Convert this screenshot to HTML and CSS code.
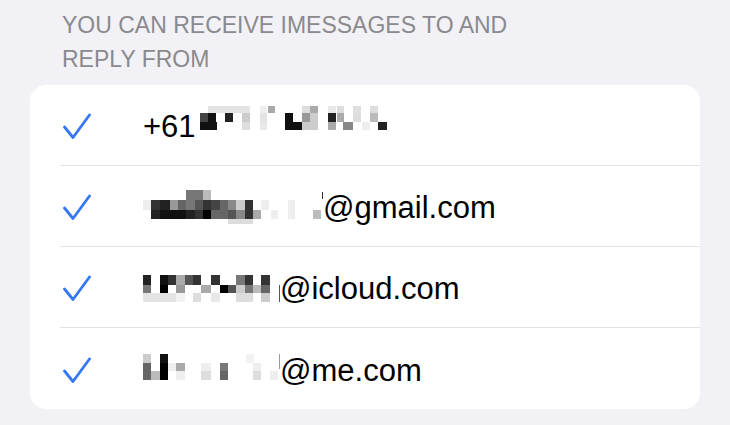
FILE: index.html
```html
<!DOCTYPE html>
<html lang="en">
<head>
    <meta charset="UTF-8">
    <meta name="viewport" content="width=device-width, initial-scale=1.0">
    <title>Send &amp; Receive</title>
    <link rel="stylesheet" href="styles.css">
</head>
<body>
    <div class="section-header">You can receive iMessages to and reply from</div>

    <div class="card">
        <div class="row">
            <div class="check">
                <svg width="28" height="26" viewBox="0 0 28 26"><path d="M1.5 14 L10 24.5 L26.5 2" /></svg>
            </div>
            <span class="address">+61</span>
            <svg class="redact redact-after" width="190" height="36">
                <g transform="translate(0,0)">
                    <rect x="8" y="1" width="42" height="7" fill="#e4e4e4"/>
                    <rect x="60" y="1" width="7" height="7" fill="#eee"/>
                    <rect x="68" y="1" width="7" height="7" fill="#aaa"/>
                    <rect x="102" y="1" width="8" height="7" fill="#ddd"/>
                    <rect x="110" y="1" width="8" height="7" fill="#aaa"/>
                    <rect x="128" y="1" width="8" height="7" fill="#e8e8e8"/>
                    <rect x="137" y="1" width="7" height="7" fill="#ddd"/>
                    <rect x="153" y="1" width="8" height="7" fill="#e0e0e0"/>
                    <rect x="170" y="1" width="8" height="7" fill="#ddd"/>

                    <rect x="0" y="8" width="8" height="9" fill="#444"/>
                    <rect x="8" y="8" width="8" height="9" fill="#111"/>
                    <rect x="25" y="8" width="8" height="9" fill="#222"/>
                    <rect x="42" y="8" width="8" height="9" fill="#ccc"/>
                    <rect x="60" y="8" width="7" height="9" fill="#e4e4e4"/>
                    <rect x="85" y="8" width="8" height="9" fill="#111"/>
                    <rect x="102" y="8" width="8" height="9" fill="#999"/>
                    <rect x="110" y="8" width="8" height="9" fill="#ccc"/>
                    <rect x="128" y="8" width="8" height="9" fill="#222"/>
                    <rect x="137" y="8" width="7" height="9" fill="#aaa"/>
                    <rect x="153" y="8" width="8" height="9" fill="#ddd"/>
                    <rect x="170" y="8" width="8" height="9" fill="#bbb"/>

                    <rect x="0" y="17" width="17" height="8" fill="#111"/>
                    <rect x="42" y="17" width="8" height="8" fill="#ddd"/>
                    <rect x="60" y="17" width="7" height="8" fill="#e8e8e8"/>
                    <rect x="85" y="17" width="17" height="8" fill="#111"/>
                    <rect x="102" y="17" width="16" height="8" fill="#ccc"/>
                    <rect x="128" y="17" width="8" height="8" fill="#aaa"/>
                    <rect x="143" y="17" width="10" height="8" fill="#888"/>
                    <rect x="162" y="17" width="8" height="8" fill="#eee"/>
                    <rect x="178" y="17" width="9" height="8" fill="#222"/>
                </g>
            </svg>
        </div>

        <div class="row">
            <div class="check">
                <svg width="28" height="26" viewBox="0 0 28 26"><path d="M1.5 14 L10 24.5 L26.5 2" /></svg>
            </div>
            <svg class="redact" width="180" height="36">
                <g transform="translate(0,2)">
                    <rect x="43" y="0" width="17" height="10" fill="#777"/>
                    <rect x="60" y="0" width="8" height="10" fill="#bbb"/>

                    <rect x="0" y="10" width="8" height="10" fill="#eee"/>
                    <rect x="8" y="10" width="9" height="10" fill="#333"/>
                    <rect x="17" y="10" width="10" height="10" fill="#222"/>
                    <rect x="27" y="10" width="8" height="10" fill="#999"/>
                    <rect x="35" y="10" width="8" height="10" fill="#666"/>
                    <rect x="43" y="10" width="9" height="10" fill="#777"/>
                    <rect x="52" y="10" width="8" height="10" fill="#555"/>
                    <rect x="60" y="10" width="8" height="10" fill="#333"/>
                    <rect x="68" y="10" width="9" height="10" fill="#444"/>
                    <rect x="77" y="10" width="8" height="10" fill="#666"/>
                    <rect x="85" y="10" width="8" height="10" fill="#888"/>
                    <rect x="93" y="10" width="9" height="10" fill="#ccc"/>
                    <rect x="102" y="10" width="8" height="10" fill="#333"/>
                    <rect x="118" y="10" width="8" height="10" fill="#eee"/>
                    <rect x="145" y="10" width="7" height="10" fill="#eee"/>

                    <rect x="8" y="20" width="9" height="9" fill="#222"/>
                    <rect x="17" y="20" width="26" height="9" fill="#111"/>
                    <rect x="43" y="20" width="9" height="9" fill="#222"/>
                    <rect x="52" y="20" width="8" height="9" fill="#333"/>
                    <rect x="60" y="20" width="8" height="9" fill="#000"/>
                    <rect x="68" y="20" width="17" height="9" fill="#666"/>
                    <rect x="85" y="20" width="8" height="9" fill="#555"/>
                    <rect x="93" y="20" width="9" height="9" fill="#888"/>
                    <rect x="102" y="20" width="8" height="9" fill="#333"/>
                    <rect x="110" y="20" width="8" height="9" fill="#aaa"/>
                    <rect x="128" y="20" width="7" height="9" fill="#eee"/>
                    <rect x="145" y="20" width="7" height="9" fill="#eee"/>
                    <rect x="170" y="20" width="8" height="9" fill="#bbb"/>

                    <rect x="85" y="29" width="25" height="6" fill="#ddd"/>
                    <rect x="179" y="2" width="1.2" height="7" fill="#333"/>
                </g>
            </svg>
            <span class="address">@gmail.com</span>
        </div>

        <div class="row">
            <div class="check">
                <svg width="28" height="26" viewBox="0 0 28 26"><path d="M1.5 14 L10 24.5 L26.5 2" /></svg>
            </div>
            <svg class="redact" width="137" height="36">
                <g transform="translate(0,6)">
                    <rect x="0" y="0" width="8" height="10" fill="#222"/>
                    <rect x="17" y="0" width="8" height="10" fill="#111"/>
                    <rect x="25" y="0" width="8" height="10" fill="#333"/>
                    <rect x="33" y="0" width="9" height="10" fill="#aaa"/>
                    <rect x="42" y="0" width="8" height="10" fill="#555"/>
                    <rect x="50" y="0" width="8" height="10" fill="#333"/>
                    <rect x="68" y="0" width="9" height="10" fill="#333"/>
                    <rect x="93" y="0" width="9" height="10" fill="#777"/>
                    <rect x="102" y="0" width="8" height="10" fill="#333"/>
                    <rect x="118" y="0" width="9" height="10" fill="#333"/>

                    <rect x="0" y="10" width="8" height="8" fill="#777"/>
                    <rect x="17" y="10" width="8" height="8" fill="#000"/>
                    <rect x="33" y="10" width="9" height="8" fill="#999"/>
                    <rect x="58" y="10" width="10" height="8" fill="#aaa"/>
                    <rect x="77" y="10" width="8" height="8" fill="#000"/>
                    <rect x="85" y="10" width="8" height="8" fill="#555"/>
                    <rect x="93" y="10" width="9" height="8" fill="#ccc"/>
                    <rect x="102" y="10" width="8" height="8" fill="#777"/>
                    <rect x="110" y="10" width="8" height="8" fill="#bbb"/>
                    <rect x="118" y="10" width="9" height="8" fill="#666"/>

                    <rect x="0" y="18" width="33" height="9" fill="#e4e4e4"/>
                    <rect x="33" y="18" width="9" height="9" fill="#f2f2f2"/>
                    <rect x="50" y="18" width="8" height="9" fill="#ddd"/>
                    <rect x="68" y="18" width="9" height="9" fill="#e8e8e8"/>
                    <rect x="93" y="18" width="17" height="9" fill="#ddd"/>
                    <rect x="118" y="18" width="9" height="9" fill="#ccc"/>

                    <rect x="136" y="10" width="1.2" height="17" fill="#555"/>
                </g>
            </svg>
            <span class="address">@icloud.com</span>
        </div>

        <div class="row">
            <div class="check">
                <svg width="28" height="26" viewBox="0 0 28 26"><path d="M1.5 14 L10 24.5 L26.5 2" /></svg>
            </div>
            <svg class="redact" width="137" height="36">
                <g transform="translate(0,3)">
                    <rect x="0" y="0" width="8" height="9" fill="#ccc"/>
                    <rect x="17" y="0" width="8" height="9" fill="#111"/>
                    <rect x="103" y="0" width="8" height="9" fill="#f2f2f2"/>

                    <rect x="0" y="9" width="8" height="8" fill="#666"/>
                    <rect x="17" y="9" width="8" height="8" fill="#000"/>
                    <rect x="25" y="9" width="8" height="8" fill="#eee"/>
                    <rect x="33" y="9" width="9" height="8" fill="#aaa"/>
                    <rect x="58" y="9" width="10" height="8" fill="#eee"/>
                    <rect x="77" y="9" width="8" height="8" fill="#777"/>
                    <rect x="110" y="9" width="8" height="8" fill="#eee"/>

                    <rect x="0" y="17" width="8" height="9" fill="#666"/>
                    <rect x="8" y="17" width="9" height="9" fill="#bbb"/>
                    <rect x="17" y="17" width="8" height="9" fill="#000"/>
                    <rect x="33" y="17" width="9" height="9" fill="#eee"/>
                    <rect x="58" y="17" width="10" height="9" fill="#ddd"/>
                    <rect x="77" y="17" width="8" height="9" fill="#666"/>
                    <rect x="110" y="17" width="8" height="9" fill="#ddd"/>
                    <rect x="127" y="17" width="8" height="9" fill="#eee"/>

                    <rect x="136" y="0" width="1.2" height="15" fill="#999"/>
                </g>
            </svg>
            <span class="address">@me.com</span>
        </div>
    </div>
</body>
</html>
```

FILE: styles.css
```css
body {
    margin: 0;
    background-color: #f2f1f6;
    font-family: 'Liberation Sans', Arial, sans-serif;
    color: #000;
}

.section-header {
    padding: 8px 40px 0 62px;
    font-size: 23px;
    line-height: 34px;
    color: #8a8a8e;
    text-transform: uppercase;
    width: 470px;
}

.card {
    margin: 9px 30px 0 30px;
    background-color: #fff;
    border-radius: 16px;
    overflow: hidden;
}

.row {
    margin-left: 30px;
    height: 81px;
    box-sizing: border-box;
    border-bottom: 1px solid #e3e3e7;
    display: flex;
    align-items: center;
}

.row:last-child {
    border-bottom: none;
}

.check {
    width: 80px;
    padding-left: 3px;
    display: flex;
    align-items: center;
}

.check svg {
    display: block;
    margin-top: 2px;
}

.check path {
    fill: none;
    stroke: #3478f6;
    stroke-width: 2.8;
    stroke-linecap: round;
    stroke-linejoin: round;
}

.address {
    font-size: 31px;
    line-height: 36px;
    margin-top: 4px;
    white-space: nowrap;
}

.redact {
    display: block;
    flex-shrink: 0;
}

.redact-after {
    margin-left: 4px;
    margin-top: -4px;
}
```
